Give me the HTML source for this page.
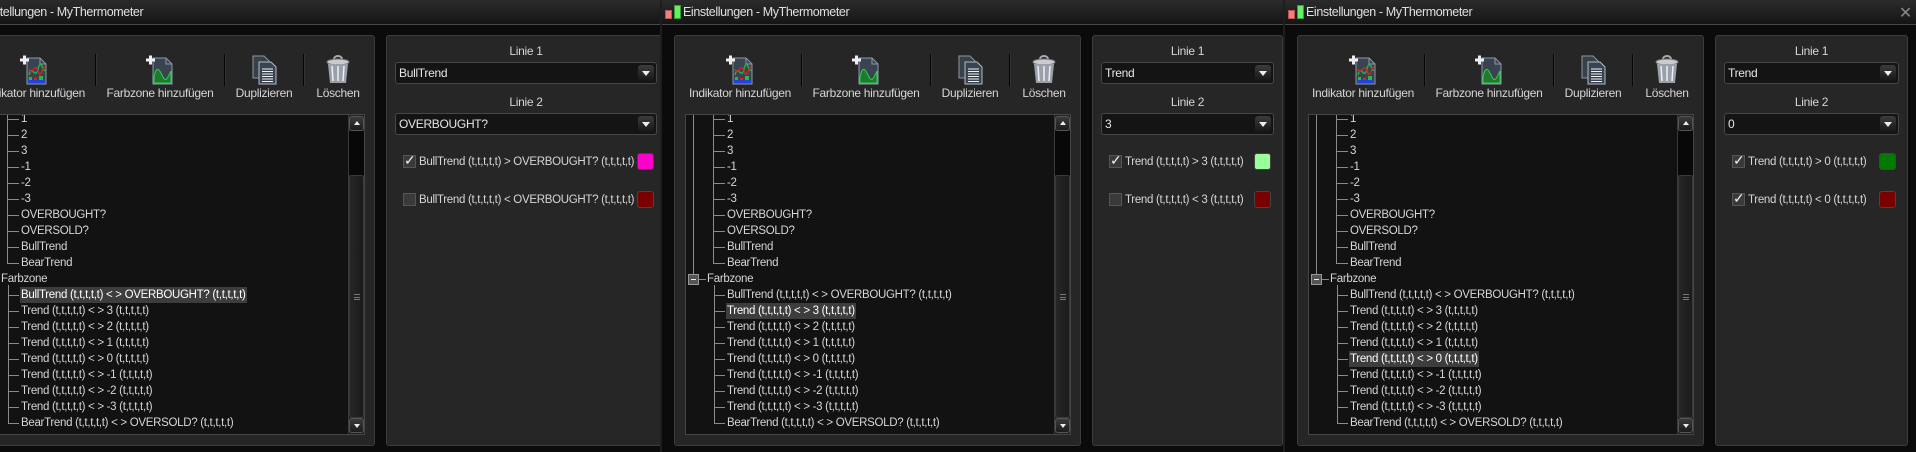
<!DOCTYPE html>
<html><head><meta charset="utf-8"><style>
*{box-sizing:border-box;margin:0;padding:0}
body{width:1916px;height:452px;background:#0b0b0b;position:relative;overflow:hidden;font-family:"Liberation Sans",Arial,sans-serif;font-size:11.5px;letter-spacing:-0.3px;color:#d6d6d6}
.win{position:absolute;top:0;height:452px;background:#0b0b0b;overflow:hidden;border-left:2px solid #1e1e1e}
.title{position:absolute;left:0;right:0;top:0;height:25px;background:linear-gradient(#2b2b2b,#151515);border-bottom:1px solid #4a4a4a}
.title .t{position:absolute;left:21px;top:5px;font-size:12.5px;letter-spacing:-0.4px;color:#e0e0e0;white-space:nowrap}
.cr{position:absolute;left:3px;top:10px;width:7px;height:9px;background:#f08080;border:1px solid #c05050}
.cg{position:absolute;left:12px;top:5px;width:7px;height:14px;background:#66ee66;border:1px solid #30a030}
.lp,.rp{position:absolute;top:35px;height:411px;background:#262626;border:1px solid #3c3c3c;border-radius:3px}
.lp{left:12px;width:407px}
.rp{left:430px}
.ico{position:absolute;top:19px;width:30px;height:30px}
.lbl{position:absolute;top:49px;width:130px;text-align:center;line-height:16px;white-space:nowrap;font-size:12px}
.sep{position:absolute;top:18px;width:2px;height:32px;background:#050505;border-right:1px solid #333}
.list{position:absolute;left:10px;top:78px;width:386px;height:321px;background:#121212;border:1px solid #454545;overflow:hidden}
.r{position:absolute;left:40px;height:16px;line-height:16px;white-space:nowrap;padding:0 1px}
.sel{background:#3d3d3d;color:#fff}
.h{position:absolute;height:1px;background:#8a8a8a;width:11px}
.v{position:absolute;width:1px;background:#8a8a8a}
.sb{position:absolute;right:0;top:0;width:16px;height:319px;background:#222;border-left:1px solid #3a3a3a}
.sbu,.sbd{position:absolute;left:0;width:15px;height:15px;background:linear-gradient(#3a3a3a,#1c1c1c);border:1px solid #555;border-radius:3px}
.sbu{top:1px}.sbd{bottom:1px}
.tri{position:absolute;left:4px;width:0;height:0;border-left:3px solid transparent;border-right:3px solid transparent}
.sbu .tri{top:4px;border-bottom:4px solid #eee}
.sbd .tri{top:5px;border-top:4px solid #eee}
.trk{position:absolute;left:0;top:16px;width:15px;height:44px;background:#080808}
.th{position:absolute;left:0;top:60px;width:15px;height:243px;background:linear-gradient(90deg,#262626,#1b1b1b);border:1px solid #3a3a3a;border-radius:3px}
.grip{position:absolute;left:4px;top:118px;width:6px;height:6px;border-top:1px solid #777;border-bottom:1px solid #777}
.grip:after{content:"";position:absolute;left:0;top:2px;width:6px;height:1px;background:#777}
.cap{position:absolute;top:7px;left:0;right:0;text-align:center;line-height:16px;font-size:12px}
.dd{position:absolute;left:8px;right:8px;height:22px;background:#141414;border:1px solid #474747;border-radius:3px;line-height:20px;padding-left:3px;font-size:12px;color:#e6e6e6}
.dd .b{position:absolute;right:2px;top:2px;width:16px;height:16px;background:linear-gradient(#3c3c3c,#161616);border-radius:3px}
.dd .b:after{content:"";position:absolute;left:4px;top:6px;border-left:4px solid transparent;border-right:4px solid transparent;border-top:5px solid #eee}
.cb{position:absolute;left:16px;width:13px;height:13px;background:#3a3a3a;border:1px solid #555}
.cb.on:after{content:"✓";position:absolute;left:0;top:-4px;font-size:14px;color:#f2f2f2}
.cl{position:absolute;left:32px;line-height:16px;white-space:nowrap}
.sw{position:absolute;right:11px;width:17px;height:17px;border-radius:3px;border:1px solid #444}
.x{position:absolute;right:4px;top:3px;font-size:16px;color:#888}
</style></head><body>

<!-- WINDOW 1 -->
<div class="win" style="left:-44px;width:706px;border-left:none">
 <div class="title"><div class="cr"></div><div class="cg"></div><div class="t">Einstellungen - MyThermometer</div></div>
 <div class="lp">
  <svg class="ico" style="left:50px" viewBox="0 0 30 30"><path d="M8 3h13l6 6v20H8z" fill="#3a4450" stroke="#8a98a6"/><path d="M21 3v6h6" fill="none" stroke="#8a98a6"/><path d="M10 20c3-12 6 6 9-6s5 4 7 1" fill="none" stroke="#22bb44" stroke-width="1.3"/><path d="M10 14c3 8 6-8 9 2s5-6 7-4" fill="none" stroke="#dd2222" stroke-width="1.3"/><rect x="9" y="25" width="17" height="3" fill="#2244dd"/><rect x="10" y="22" width="3" height="3" fill="#22bb44"/><rect x="15" y="23" width="3" height="2" fill="#dd2222"/><rect x="20" y="21" width="4" height="4" fill="#22bb44"/><path d="M1 5h9M5.5 0.5v9" stroke="#eee" stroke-width="3"/></svg>
  <div class="lbl" style="left:0px">Indikator hinzufügen</div>
  <div class="sep" style="left:126px"></div>
  <svg class="ico" style="left:176px" viewBox="0 0 30 30"><path d="M8 3h13l6 6v20H8z" fill="#3a4450" stroke="#8a98a6"/><path d="M21 3v6h6" fill="none" stroke="#8a98a6"/><path d="M9 28V22c3-14 6-6 9 0s5 0 8-6v12z" fill="#1f7a2f" stroke="#33cc55"/><path d="M1 5h9M5.5 0.5v9" stroke="#eee" stroke-width="3"/></svg>
  <div class="lbl" style="left:126px">Farbzone hinzufügen</div>
  <div class="sep" style="left:255px"></div>
  <svg class="ico" style="left:280px" viewBox="0 0 30 30"><path d="M4 1h11l5 5v17H4z" fill="#3a4048" stroke="#8a96a0"/><path d="M10 7h12l5 5v17H10z" fill="#3a4450" stroke="#b0bcc8"/><path d="M13 14h11M13 16.5h11M13 19h11M13 21.5h11M13 24h11M13 26.5h11" stroke="#f0f0f0"/></svg>
  <div class="lbl" style="left:230px">Duplizieren</div>
  <div class="sep" style="left:334px"></div>
  <svg class="ico" style="left:354px" viewBox="0 0 30 30"><path d="M11 4a4 3 0 0 1 8 0" fill="none" stroke="#aaa" stroke-width="2"/><ellipse cx="15" cy="7" rx="11" ry="3" fill="#c8ccd0" stroke="#777"/><path d="M5 9l2 19h16l2-19z" fill="#9aa0a6"/><path d="M9 11l1 15M15 11v15M21 11l-1 15" stroke="#eef" stroke-width="1.5"/></svg>
  <div class="lbl" style="left:304px">Löschen</div>
  <div class="list">
   <div class="v" style="left:7px;top:0;height:165px"></div>
   <div class="v" style="left:27px;top:0;height:149px"></div>
   <div class="h" style="left:28px;top:4px"></div><div class="r" style="top:-4px">1</div>
   <div class="h" style="left:28px;top:20px"></div><div class="r" style="top:12px">2</div>
   <div class="h" style="left:28px;top:36px"></div><div class="r" style="top:28px">3</div>
   <div class="h" style="left:28px;top:52px"></div><div class="r" style="top:44px">-1</div>
   <div class="h" style="left:28px;top:68px"></div><div class="r" style="top:60px">-2</div>
   <div class="h" style="left:28px;top:84px"></div><div class="r" style="top:76px">-3</div>
   <div class="h" style="left:28px;top:100px"></div><div class="r" style="top:92px">OVERBOUGHT?</div>
   <div class="h" style="left:28px;top:116px"></div><div class="r" style="top:108px">OVERSOLD?</div>
   <div class="h" style="left:28px;top:132px"></div><div class="r" style="top:124px">BullTrend</div>
   <div class="h" style="left:28px;top:148px"></div><div class="r" style="top:140px">BearTrend</div>
   <div style="position:absolute;left:2px;top:159px;width:11px;height:11px;border:1px solid #999;background:#555"><div style="position:absolute;left:2px;top:4px;width:5px;height:1px;background:#eee"></div></div>
   <div class="h" style="left:13px;top:164px;width:7px"></div><div class="r" style="top:156px;left:20px">Farbzone</div>
   <div class="v" style="left:28px;top:170px;height:139px"></div>
   <div class="h" style="left:28px;top:180px"></div><div class="r sel" style="top:172px">BullTrend (t,t,t,t,t) &lt; &gt; OVERBOUGHT? (t,t,t,t,t)</div>
   <div class="h" style="left:28px;top:196px"></div><div class="r" style="top:188px">Trend (t,t,t,t,t) &lt; &gt; 3 (t,t,t,t,t)</div>
   <div class="h" style="left:28px;top:212px"></div><div class="r" style="top:204px">Trend (t,t,t,t,t) &lt; &gt; 2 (t,t,t,t,t)</div>
   <div class="h" style="left:28px;top:228px"></div><div class="r" style="top:220px">Trend (t,t,t,t,t) &lt; &gt; 1 (t,t,t,t,t)</div>
   <div class="h" style="left:28px;top:244px"></div><div class="r" style="top:236px">Trend (t,t,t,t,t) &lt; &gt; 0 (t,t,t,t,t)</div>
   <div class="h" style="left:28px;top:260px"></div><div class="r" style="top:252px">Trend (t,t,t,t,t) &lt; &gt; -1 (t,t,t,t,t)</div>
   <div class="h" style="left:28px;top:276px"></div><div class="r" style="top:268px">Trend (t,t,t,t,t) &lt; &gt; -2 (t,t,t,t,t)</div>
   <div class="h" style="left:28px;top:292px"></div><div class="r" style="top:284px">Trend (t,t,t,t,t) &lt; &gt; -3 (t,t,t,t,t)</div>
   <div class="h" style="left:28px;top:308px"></div><div class="r" style="top:300px">BearTrend (t,t,t,t,t) &lt; &gt; OVERSOLD? (t,t,t,t,t)</div>
   <div class="sb"><div class="sbu"><div class="tri"></div></div><div class="trk"></div><div class="th"><div class="grip"></div></div><div class="sbd"><div class="tri"></div></div></div>
  </div>
 </div>
 <div class="rp" style="width:280px">
  <div class="cap">Linie 1</div>
  <div class="dd" style="top:26px">BullTrend<div class="b"></div></div>
  <div class="cap" style="top:58px">Linie 2</div>
  <div class="dd" style="top:77px">OVERBOUGHT?<div class="b"></div></div>
  <div class="cb on" style="top:119px"></div><div class="cl" style="top:118px">BullTrend (t,t,t,t,t) &gt; OVERBOUGHT? (t,t,t,t,t)</div><div class="sw" style="top:117px;background:#ff00cc"></div>
  <div class="cb" style="top:157px"></div><div class="cl" style="top:156px">BullTrend (t,t,t,t,t) &lt; OVERBOUGHT? (t,t,t,t,t)</div><div class="sw" style="top:155px;background:#7a0000"></div>
 </div>
</div>

<!-- WINDOW 2 -->
<div class="win" style="left:660px;width:625px">
 <div class="title"><div class="cr"></div><div class="cg"></div><div class="t">Einstellungen - MyThermometer</div></div>
 <div class="lp">
  <svg class="ico" style="left:50px" viewBox="0 0 30 30"><path d="M8 3h13l6 6v20H8z" fill="#3a4450" stroke="#8a98a6"/><path d="M21 3v6h6" fill="none" stroke="#8a98a6"/><path d="M10 20c3-12 6 6 9-6s5 4 7 1" fill="none" stroke="#22bb44" stroke-width="1.3"/><path d="M10 14c3 8 6-8 9 2s5-6 7-4" fill="none" stroke="#dd2222" stroke-width="1.3"/><rect x="9" y="25" width="17" height="3" fill="#2244dd"/><rect x="10" y="22" width="3" height="3" fill="#22bb44"/><rect x="15" y="23" width="3" height="2" fill="#dd2222"/><rect x="20" y="21" width="4" height="4" fill="#22bb44"/><path d="M1 5h9M5.5 0.5v9" stroke="#eee" stroke-width="3"/></svg>
  <div class="lbl" style="left:0px">Indikator hinzufügen</div>
  <div class="sep" style="left:126px"></div>
  <svg class="ico" style="left:176px" viewBox="0 0 30 30"><path d="M8 3h13l6 6v20H8z" fill="#3a4450" stroke="#8a98a6"/><path d="M21 3v6h6" fill="none" stroke="#8a98a6"/><path d="M9 28V22c3-14 6-6 9 0s5 0 8-6v12z" fill="#1f7a2f" stroke="#33cc55"/><path d="M1 5h9M5.5 0.5v9" stroke="#eee" stroke-width="3"/></svg>
  <div class="lbl" style="left:126px">Farbzone hinzufügen</div>
  <div class="sep" style="left:255px"></div>
  <svg class="ico" style="left:280px" viewBox="0 0 30 30"><path d="M4 1h11l5 5v17H4z" fill="#3a4048" stroke="#8a96a0"/><path d="M10 7h12l5 5v17H10z" fill="#3a4450" stroke="#b0bcc8"/><path d="M13 14h11M13 16.5h11M13 19h11M13 21.5h11M13 24h11M13 26.5h11" stroke="#f0f0f0"/></svg>
  <div class="lbl" style="left:230px">Duplizieren</div>
  <div class="sep" style="left:334px"></div>
  <svg class="ico" style="left:354px" viewBox="0 0 30 30"><path d="M11 4a4 3 0 0 1 8 0" fill="none" stroke="#aaa" stroke-width="2"/><ellipse cx="15" cy="7" rx="11" ry="3" fill="#c8ccd0" stroke="#777"/><path d="M5 9l2 19h16l2-19z" fill="#9aa0a6"/><path d="M9 11l1 15M15 11v15M21 11l-1 15" stroke="#eef" stroke-width="1.5"/></svg>
  <div class="lbl" style="left:304px">Löschen</div>
  <div class="list">
   <div class="v" style="left:7px;top:0;height:165px"></div>
   <div class="v" style="left:27px;top:0;height:149px"></div>
   <div class="h" style="left:28px;top:4px"></div><div class="r" style="top:-4px">1</div>
   <div class="h" style="left:28px;top:20px"></div><div class="r" style="top:12px">2</div>
   <div class="h" style="left:28px;top:36px"></div><div class="r" style="top:28px">3</div>
   <div class="h" style="left:28px;top:52px"></div><div class="r" style="top:44px">-1</div>
   <div class="h" style="left:28px;top:68px"></div><div class="r" style="top:60px">-2</div>
   <div class="h" style="left:28px;top:84px"></div><div class="r" style="top:76px">-3</div>
   <div class="h" style="left:28px;top:100px"></div><div class="r" style="top:92px">OVERBOUGHT?</div>
   <div class="h" style="left:28px;top:116px"></div><div class="r" style="top:108px">OVERSOLD?</div>
   <div class="h" style="left:28px;top:132px"></div><div class="r" style="top:124px">BullTrend</div>
   <div class="h" style="left:28px;top:148px"></div><div class="r" style="top:140px">BearTrend</div>
   <div style="position:absolute;left:2px;top:159px;width:11px;height:11px;border:1px solid #999;background:#555"><div style="position:absolute;left:2px;top:4px;width:5px;height:1px;background:#eee"></div></div>
   <div class="h" style="left:13px;top:164px;width:7px"></div><div class="r" style="top:156px;left:20px">Farbzone</div>
   <div class="v" style="left:28px;top:170px;height:139px"></div>
   <div class="h" style="left:28px;top:180px"></div><div class="r" style="top:172px">BullTrend (t,t,t,t,t) &lt; &gt; OVERBOUGHT? (t,t,t,t,t)</div>
   <div class="h" style="left:28px;top:196px"></div><div class="r sel" style="top:188px">Trend (t,t,t,t,t) &lt; &gt; 3 (t,t,t,t,t)</div>
   <div class="h" style="left:28px;top:212px"></div><div class="r" style="top:204px">Trend (t,t,t,t,t) &lt; &gt; 2 (t,t,t,t,t)</div>
   <div class="h" style="left:28px;top:228px"></div><div class="r" style="top:220px">Trend (t,t,t,t,t) &lt; &gt; 1 (t,t,t,t,t)</div>
   <div class="h" style="left:28px;top:244px"></div><div class="r" style="top:236px">Trend (t,t,t,t,t) &lt; &gt; 0 (t,t,t,t,t)</div>
   <div class="h" style="left:28px;top:260px"></div><div class="r" style="top:252px">Trend (t,t,t,t,t) &lt; &gt; -1 (t,t,t,t,t)</div>
   <div class="h" style="left:28px;top:276px"></div><div class="r" style="top:268px">Trend (t,t,t,t,t) &lt; &gt; -2 (t,t,t,t,t)</div>
   <div class="h" style="left:28px;top:292px"></div><div class="r" style="top:284px">Trend (t,t,t,t,t) &lt; &gt; -3 (t,t,t,t,t)</div>
   <div class="h" style="left:28px;top:308px"></div><div class="r" style="top:300px">BearTrend (t,t,t,t,t) &lt; &gt; OVERSOLD? (t,t,t,t,t)</div>
   <div class="sb"><div class="sbu"><div class="tri"></div></div><div class="trk"></div><div class="th"><div class="grip"></div></div><div class="sbd"><div class="tri"></div></div></div>
  </div>
 </div>
 <div class="rp" style="width:191px">
  <div class="cap">Linie 1</div>
  <div class="dd" style="top:26px">Trend<div class="b"></div></div>
  <div class="cap" style="top:58px">Linie 2</div>
  <div class="dd" style="top:77px">3<div class="b"></div></div>
  <div class="cb on" style="top:119px"></div><div class="cl" style="top:118px">Trend (t,t,t,t,t) &gt; 3 (t,t,t,t,t)</div><div class="sw" style="top:117px;background:#99ff99"></div>
  <div class="cb" style="top:157px"></div><div class="cl" style="top:156px">Trend (t,t,t,t,t) &lt; 3 (t,t,t,t,t)</div><div class="sw" style="top:155px;background:#7a0000"></div>
 </div>
</div>

<!-- WINDOW 3 -->
<div class="win" style="left:1283px;width:633px">
 <div class="title"><div class="cr"></div><div class="cg"></div><div class="t">Einstellungen - MyThermometer</div><div class="x">✕</div></div>
 <div class="lp">
  <svg class="ico" style="left:50px" viewBox="0 0 30 30"><path d="M8 3h13l6 6v20H8z" fill="#3a4450" stroke="#8a98a6"/><path d="M21 3v6h6" fill="none" stroke="#8a98a6"/><path d="M10 20c3-12 6 6 9-6s5 4 7 1" fill="none" stroke="#22bb44" stroke-width="1.3"/><path d="M10 14c3 8 6-8 9 2s5-6 7-4" fill="none" stroke="#dd2222" stroke-width="1.3"/><rect x="9" y="25" width="17" height="3" fill="#2244dd"/><rect x="10" y="22" width="3" height="3" fill="#22bb44"/><rect x="15" y="23" width="3" height="2" fill="#dd2222"/><rect x="20" y="21" width="4" height="4" fill="#22bb44"/><path d="M1 5h9M5.5 0.5v9" stroke="#eee" stroke-width="3"/></svg>
  <div class="lbl" style="left:0px">Indikator hinzufügen</div>
  <div class="sep" style="left:126px"></div>
  <svg class="ico" style="left:176px" viewBox="0 0 30 30"><path d="M8 3h13l6 6v20H8z" fill="#3a4450" stroke="#8a98a6"/><path d="M21 3v6h6" fill="none" stroke="#8a98a6"/><path d="M9 28V22c3-14 6-6 9 0s5 0 8-6v12z" fill="#1f7a2f" stroke="#33cc55"/><path d="M1 5h9M5.5 0.5v9" stroke="#eee" stroke-width="3"/></svg>
  <div class="lbl" style="left:126px">Farbzone hinzufügen</div>
  <div class="sep" style="left:255px"></div>
  <svg class="ico" style="left:280px" viewBox="0 0 30 30"><path d="M4 1h11l5 5v17H4z" fill="#3a4048" stroke="#8a96a0"/><path d="M10 7h12l5 5v17H10z" fill="#3a4450" stroke="#b0bcc8"/><path d="M13 14h11M13 16.5h11M13 19h11M13 21.5h11M13 24h11M13 26.5h11" stroke="#f0f0f0"/></svg>
  <div class="lbl" style="left:230px">Duplizieren</div>
  <div class="sep" style="left:334px"></div>
  <svg class="ico" style="left:354px" viewBox="0 0 30 30"><path d="M11 4a4 3 0 0 1 8 0" fill="none" stroke="#aaa" stroke-width="2"/><ellipse cx="15" cy="7" rx="11" ry="3" fill="#c8ccd0" stroke="#777"/><path d="M5 9l2 19h16l2-19z" fill="#9aa0a6"/><path d="M9 11l1 15M15 11v15M21 11l-1 15" stroke="#eef" stroke-width="1.5"/></svg>
  <div class="lbl" style="left:304px">Löschen</div>
  <div class="list">
   <div class="v" style="left:7px;top:0;height:165px"></div>
   <div class="v" style="left:27px;top:0;height:149px"></div>
   <div class="h" style="left:28px;top:4px"></div><div class="r" style="top:-4px">1</div>
   <div class="h" style="left:28px;top:20px"></div><div class="r" style="top:12px">2</div>
   <div class="h" style="left:28px;top:36px"></div><div class="r" style="top:28px">3</div>
   <div class="h" style="left:28px;top:52px"></div><div class="r" style="top:44px">-1</div>
   <div class="h" style="left:28px;top:68px"></div><div class="r" style="top:60px">-2</div>
   <div class="h" style="left:28px;top:84px"></div><div class="r" style="top:76px">-3</div>
   <div class="h" style="left:28px;top:100px"></div><div class="r" style="top:92px">OVERBOUGHT?</div>
   <div class="h" style="left:28px;top:116px"></div><div class="r" style="top:108px">OVERSOLD?</div>
   <div class="h" style="left:28px;top:132px"></div><div class="r" style="top:124px">BullTrend</div>
   <div class="h" style="left:28px;top:148px"></div><div class="r" style="top:140px">BearTrend</div>
   <div style="position:absolute;left:2px;top:159px;width:11px;height:11px;border:1px solid #999;background:#555"><div style="position:absolute;left:2px;top:4px;width:5px;height:1px;background:#eee"></div></div>
   <div class="h" style="left:13px;top:164px;width:7px"></div><div class="r" style="top:156px;left:20px">Farbzone</div>
   <div class="v" style="left:28px;top:170px;height:139px"></div>
   <div class="h" style="left:28px;top:180px"></div><div class="r" style="top:172px">BullTrend (t,t,t,t,t) &lt; &gt; OVERBOUGHT? (t,t,t,t,t)</div>
   <div class="h" style="left:28px;top:196px"></div><div class="r" style="top:188px">Trend (t,t,t,t,t) &lt; &gt; 3 (t,t,t,t,t)</div>
   <div class="h" style="left:28px;top:212px"></div><div class="r" style="top:204px">Trend (t,t,t,t,t) &lt; &gt; 2 (t,t,t,t,t)</div>
   <div class="h" style="left:28px;top:228px"></div><div class="r" style="top:220px">Trend (t,t,t,t,t) &lt; &gt; 1 (t,t,t,t,t)</div>
   <div class="h" style="left:28px;top:244px"></div><div class="r sel" style="top:236px">Trend (t,t,t,t,t) &lt; &gt; 0 (t,t,t,t,t)</div>
   <div class="h" style="left:28px;top:260px"></div><div class="r" style="top:252px">Trend (t,t,t,t,t) &lt; &gt; -1 (t,t,t,t,t)</div>
   <div class="h" style="left:28px;top:276px"></div><div class="r" style="top:268px">Trend (t,t,t,t,t) &lt; &gt; -2 (t,t,t,t,t)</div>
   <div class="h" style="left:28px;top:292px"></div><div class="r" style="top:284px">Trend (t,t,t,t,t) &lt; &gt; -3 (t,t,t,t,t)</div>
   <div class="h" style="left:28px;top:308px"></div><div class="r" style="top:300px">BearTrend (t,t,t,t,t) &lt; &gt; OVERSOLD? (t,t,t,t,t)</div>
   <div class="sb"><div class="sbu"><div class="tri"></div></div><div class="trk"></div><div class="th"><div class="grip"></div></div><div class="sbd"><div class="tri"></div></div></div>
  </div>
 </div>
 <div class="rp" style="width:193px">
  <div class="cap">Linie 1</div>
  <div class="dd" style="top:26px">Trend<div class="b"></div></div>
  <div class="cap" style="top:58px">Linie 2</div>
  <div class="dd" style="top:77px">0<div class="b"></div></div>
  <div class="cb on" style="top:119px"></div><div class="cl" style="top:118px">Trend (t,t,t,t,t) &gt; 0 (t,t,t,t,t)</div><div class="sw" style="top:117px;background:#007a00"></div>
  <div class="cb on" style="top:157px"></div><div class="cl" style="top:156px">Trend (t,t,t,t,t) &lt; 0 (t,t,t,t,t)</div><div class="sw" style="top:155px;background:#7a0000"></div>
 </div>
</div>
</body></html>
